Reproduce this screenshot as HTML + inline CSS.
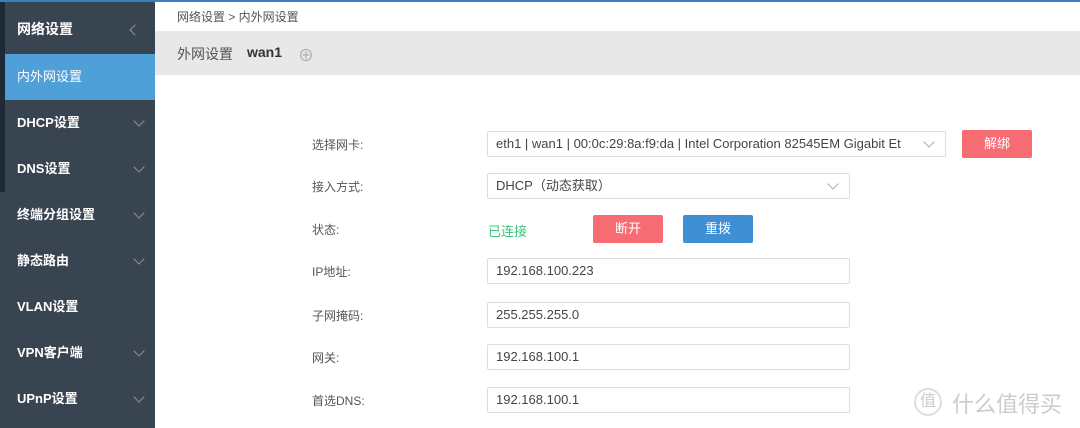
<!DOCTYPE html>
<html><head><meta charset="utf-8"><style>
*{margin:0;padding:0;box-sizing:border-box}
body{width:1080px;height:428px;overflow:hidden;background:#fff;font-family:"Liberation Sans","Noto Sans CJK SC",sans-serif;position:relative;font-size:13px;color:#555}
.top{position:absolute;left:0;top:0;width:1080px;height:2px;background:#3a7fc0}
.side{position:absolute;left:0;top:2px;width:155px;height:426px;background:#394451}
.strip{position:absolute;left:0;top:2px;width:5px;height:190px;background:#1f2a37}
.it{position:absolute;left:5px;width:150px;height:46px;line-height:46px;padding-left:12px;color:#fff;font-size:13px;font-weight:bold}
.it.act{background:#4f9fd9;font-weight:normal}
.chev{position:absolute;right:12px;top:17px;width:8px;height:8px;border-right:1px solid #8a95a2;border-bottom:1px solid #8a95a2;transform:rotate(45deg)}
.lt{position:absolute;right:16px;top:20px;width:8px;height:8px;border-left:1px solid #8a95a2;border-bottom:1px solid #8a95a2;transform:rotate(45deg)}
.bc{position:absolute;left:177px;top:8px;font-size:12px;color:#555}
.hd{position:absolute;left:155px;top:31px;width:925px;height:44px;background:#e8e8e8}
.hd span{position:absolute;top:13px;font-size:14px;color:#555}
.lb{position:absolute;left:312px;font-size:12px;color:#555}
.in{position:absolute;left:487px;width:363px;height:26px;border:1px solid #ddd;border-radius:2px;padding-left:8px;line-height:24px;font-size:13px;color:#444;white-space:nowrap;overflow:hidden}
.dd{position:absolute;right:12px;top:6px;width:8px;height:8px;border-right:1px solid #aaa;border-bottom:1px solid #aaa;transform:rotate(45deg)}
.bt{position:absolute;width:70px;height:28px;line-height:28px;text-align:center;color:#fff;font-size:13px;border-radius:2px}
</style></head><body>
<div class="side"></div><div class="strip"></div><div class="top"></div>
<div class="it" style="top:6px;font-size:14px">网络设置<div class="lt"></div></div>
<div class="it act" style="top:54px">内外网设置</div>
<div class="it" style="top:100px">DHCP设置<div class="chev"></div></div>
<div class="it" style="top:146px">DNS设置<div class="chev"></div></div>
<div class="it" style="top:192px">终端分组设置<div class="chev"></div></div>
<div class="it" style="top:238px">静态路由<div class="chev"></div></div>
<div class="it" style="top:284px">VLAN设置</div>
<div class="it" style="top:330px">VPN客户端<div class="chev"></div></div>
<div class="it" style="top:376px">UPnP设置<div class="chev"></div></div>
<div class="bc">网络设置 &gt; 内外网设置</div>
<div class="hd"><span style="left:22px">外网设置</span><span style="left:92px;font-weight:bold;color:#333">wan1</span><span style="left:143px;color:#aaa;font-size:16px;top:11px">⊕</span></div>
<div class="lb" style="top:136px">选择网卡:</div>
<div class="in" style="top:131px;width:459px">eth1 | wan1 | 00:0c:29:8a:f9:da | Intel Corporation 82545EM Gigabit Et<div class="dd"></div></div>
<div class="bt" style="left:962px;top:130px;background:#f76b72">解绑</div>
<div class="lb" style="top:178px">接入方式:</div>
<div class="in" style="top:173px">DHCP（动态获取）<div class="dd"></div></div>
<div class="lb" style="top:221px">状态:</div>
<div style="position:absolute;left:488px;top:221px;color:#3cc47c;font-size:13px">已连接</div>
<div class="bt" style="left:593px;top:215px;background:#f76b72">断开</div>
<div class="bt" style="left:683px;top:215px;background:#3f8fd4">重拨</div>
<div class="lb" style="top:263px">IP地址:</div>
<div class="in" style="top:258px">192.168.100.223</div>
<div class="lb" style="top:307px">子网掩码:</div>
<div class="in" style="top:302px">255.255.255.0</div>
<div class="lb" style="top:349px">网关:</div>
<div class="in" style="top:344px">192.168.100.1</div>
<div class="lb" style="top:392px">首选DNS:</div>
<div class="in" style="top:387px">192.168.100.1</div>
<div style="position:absolute;left:914px;top:388px;width:28px;height:28px;border:2px solid #ddd;border-radius:50%;text-align:center;line-height:24px;color:#ccc;font-size:16px">值</div>
<div style="position:absolute;left:952px;top:387px;color:#ccc;font-size:22px;white-space:nowrap;letter-spacing:0">什么值得买</div>
</body></html>
